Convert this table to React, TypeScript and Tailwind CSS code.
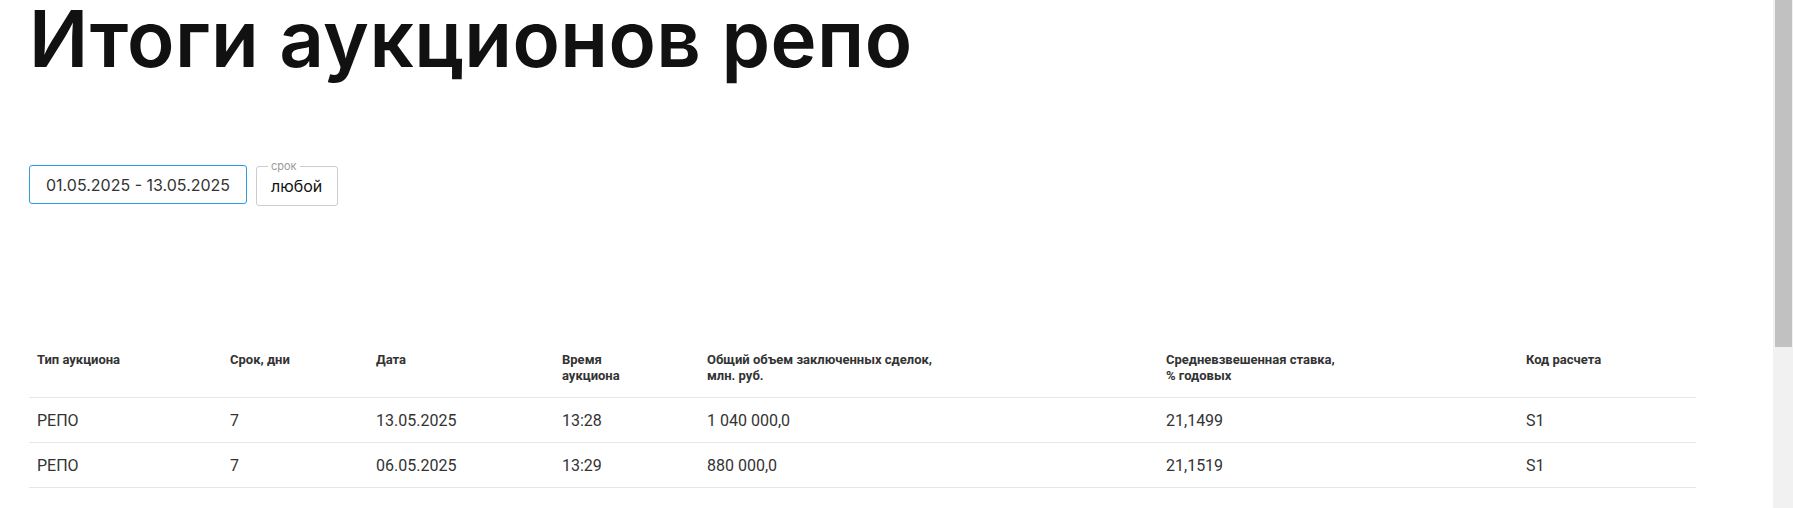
import React from 'react';

const rows = [
  { type: 'РЕПО', term: '7', date: '13.05.2025', time: '13:28', volume: '1 040 000,0', rate: '21,1499', code: 'S1' },
  { type: 'РЕПО', term: '7', date: '06.05.2025', time: '13:29', volume: '880 000,0', rate: '21,1519', code: 'S1' },
];

const widths = [193, 146, 186, 145, 459, 360, 178];

export default function App() {
  return (
    <div className="flex h-[508px] overflow-hidden bg-white">
      <main className="flex-1 pl-[29px]">
        <h1 className="whitespace-nowrap font-['Inter',sans-serif] text-[78px] leading-[78px] font-semibold tracking-[0.4px] text-[#111111]">
          Итоги аукционов репо
        </h1>

        <div className="mt-[87px] flex items-start gap-[9px]">
          <div className="flex h-[39px] w-[218px] items-center whitespace-nowrap rounded-[3px] border border-[#2d9be0] pl-[16px] font-['Inter',sans-serif] text-[16px] text-[#333333]">
            01.05.2025 - 13.05.2025
          </div>
          <div className="relative mt-[1px] flex h-[40px] w-[82px] items-center rounded-[3px] border border-[#cccccc] px-[14px] font-['Inter',sans-serif] text-[16px] text-[#111111]">
            <span className="absolute left-[11px] top-[-8px] bg-white px-[3px] text-[11px] leading-[14px] text-[#9a9a9a]">
              срок
            </span>
            любой
          </div>
        </div>

        <table className="mt-[134px] w-[1667px] table-fixed border-collapse font-['Roboto',sans-serif] text-[#333333]">
          <colgroup>
            {widths.map((w, i) => (
              <col key={i} style={{ width: w }} />
            ))}
          </colgroup>
          <thead>
            <tr className="border-b border-[#e6e6e6]">
              {[
                ['Тип аукциона'],
                ['Срок, дни'],
                ['Дата'],
                ['Время', 'аукциона'],
                ['Общий объем заключенных сделок,', 'млн. руб.'],
                ['Средневзвешенная ставка,', '% годовых'],
                ['Код расчета'],
              ].map((lines, i) => (
                <th
                  key={i}
                  className="pl-[8px] pt-[12px] pb-[13px] text-left align-top text-[13px] leading-[16px] font-bold"
                >
                  {lines.map((l, j) => (
                    <div key={j}>{l}</div>
                  ))}
                </th>
              ))}
            </tr>
          </thead>
          <tbody>
            {rows.map((r, i) => (
              <tr key={i} className="border-b border-[#e6e6e6]">
                {[r.type, r.term, r.date, r.time, r.volume, r.rate, r.code].map((v, j) => (
                  <td key={j} className="pl-[8px] pt-[11px] pb-[9px] text-left text-[16px] leading-[24px]">
                    {v}
                  </td>
                ))}
              </tr>
            ))}
          </tbody>
        </table>
      </main>

      <div className="flex w-[20px] justify-center bg-[#f1f1f1]">
        <div className="h-[347px] w-[17px] bg-[#c1c1c1]" />
      </div>
    </div>
  );
}
